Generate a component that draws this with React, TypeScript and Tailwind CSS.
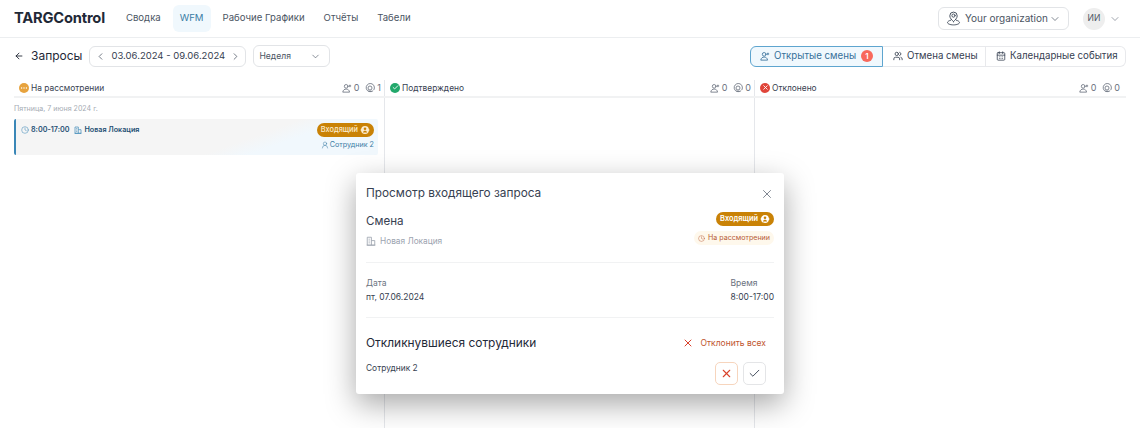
import { ArrowLeft, CalendarDays, Check, ChevronDown, ChevronLeft, ChevronRight, Clock, Users, UserRound, X } from "lucide-react";

const Incoming = ({ light }: { light?: boolean }) => (
  <span className={`flex h-[14px] items-center gap-[2px] rounded-full bg-[#c98206] px-[4px] text-[7.4px] leading-none ${light ? "font-medium text-[#fbeccf]" : "font-semibold text-white"}`}>
    Входящий
    <svg width="10" height="10" viewBox="0 0 10 10" className="shrink-0">
      <circle cx="5" cy="5" r="3.9" fill={light ? "#fbeccf" : "#fff"} />
      <rect x="0.5" y="4.2" width="9" height="1.6" rx="0.8" fill={light ? "#fbeccf" : "#fff"} />
      <circle cx="5" cy="3.7" r="1.3" fill="#c98206" />
      <path d="M2.8 7.5c.4-1.3 1.2-1.8 2.2-1.8s1.8.5 2.2 1.8z" fill="#c98206" />
    </svg>
  </span>
);

const PersonPlus = ({ size = 10 }: { size?: number }) => (
  <svg width={size} height={size} viewBox="0 0 12 12" fill="none" stroke="currentColor" strokeWidth="1" strokeLinecap="round" className="shrink-0">
    <circle cx="5" cy="4" r="2.2" />
    <path d="M1 10.5c.4-2.2 2-3.2 4-3.2s3.6 1 4 3.2z" />
    <path d="M9.5 2.5v2M8.5 3.5h2" />
  </svg>
);

const Target = ({ size = 10 }: { size?: number }) => (
  <svg width={size} height={size} viewBox="0 0 12 12" fill="none" stroke="currentColor" strokeWidth="1" className="shrink-0">
    <path d="M10.8 8A5 5 0 1 0 9.4 9.6" strokeLinecap="round" />
    <circle cx="6" cy="6" r="2.4" />
    <path d="M4.5 9.8h3" strokeLinecap="round" />
  </svg>
);

const Building = ({ size = 10 }: { size?: number }) => (
  <svg width={size} height={size} viewBox="0 0 12 12" fill="none" stroke="currentColor" strokeWidth="1" strokeLinejoin="round" className="shrink-0">
    <path d="M1.5 11V1.5h5V11z" />
    <path d="M6.5 5.5h4V11h-4M0.8 11h10.4" />
    <path d="M3 3.8h2M3 6h2M3 8.2h2" strokeWidth="0.8" />
  </svg>
);

const OrgIcon = () => (
  <svg width="15" height="15" viewBox="0 0 15 15" fill="none" stroke="currentColor" strokeWidth="1" strokeLinecap="round" className="shrink-0">
    <circle cx="7.5" cy="4.6" r="1.6" />
    <path d="M7.5 10.6C5.6 8.9 3.8 7 3.8 4.8a3.7 3.7 0 0 1 7.4 0c0 2.2-1.8 4.1-3.7 5.8z" />
    <path d="M4.6 9.2C2.7 9.8 1.5 10.6 1.5 11.6c0 1.2 2.7 2.3 6 2.3s6-1.1 6-2.3c0-1-1.2-1.8-3.1-2.4" />
  </svg>
);

const Counts = ({ a, b }: { a: number; b: number }) => (
  <div className="flex items-center gap-[6px] text-[9px] text-[#6b7280]">
    <span className="flex items-center gap-[2px]"><PersonPlus />{a}</span>
    <span className="flex items-center gap-[2px]"><Target />{b}</span>
  </div>
);

const Dot = ({ color, children }: { color: string; children: React.ReactNode }) => (
  <span className="flex h-[10px] w-[10px] items-center justify-center rounded-full text-white" style={{ backgroundColor: color }}>{children}</span>
);

export default function App() {
  return (
    <div className="relative h-[428px] w-[1140px] overflow-hidden bg-white font-['Inter',sans-serif] text-[#374151]">
      <header className="flex h-[38px] items-center justify-between border-b border-[#eceef0] pl-[14px] pr-[19px]">
        <div className="flex items-center">
          <span className="mr-[14px] text-[14.7px] font-bold tracking-[-0.2px] text-[#1f2937]">TARGControl</span>
          <nav className="flex items-center gap-[5px] text-[9.6px] text-[#4b5563]">
            <span className="px-[7px] py-[6px]">Сводка</span>
            <span className="rounded-md bg-[#f0f8fd] px-[7px] py-[6px] text-[#3a7ca5]">WFM</span>
            <span className="px-[7px] py-[6px]">Рабочие Графики</span>
            <span className="px-[7px] py-[6px]">Отчёты</span>
            <span className="px-[7px] py-[6px]">Табели</span>
          </nav>
        </div>
        <div className="flex items-center">
          <div className="flex h-[23px] w-[131px] items-center justify-between rounded-md border border-[#e2e4e7] pl-[7px] pr-[7px] text-[10px] text-[#4b5563]">
            <span className="flex items-center gap-[4px] whitespace-nowrap"><OrgIcon />Your organization</span>
            <ChevronDown size={12} strokeWidth={1.4} />
          </div>
          <div className="ml-[14px] flex h-[22px] w-[22px] items-center justify-center rounded-full bg-[#eeeeee] text-[8.5px] text-[#4b5563]">ИИ</div>
          <ChevronDown size={12} strokeWidth={1.3} className="ml-[4px] text-[#6b7280]" />
        </div>
      </header>

      <div className="flex h-[36px] items-center justify-between px-[14px]">
        <div className="flex items-center">
          <ArrowLeft size={10} strokeWidth={2} className="text-[#111827]" />
          <span className="ml-[7px] text-[12px] text-[#1f2937]">Запросы</span>
          <div className="ml-[7px] flex h-[21px] w-[157px] items-center rounded-md border border-[#e2e4e7] pl-[5px] pr-[4px] text-[9.5px] text-[#374151]">
            <ChevronLeft size={11} strokeWidth={1.5} />
            <span className="ml-[5px] whitespace-nowrap">03.06.2024 - 09.06.2024</span>
            <ChevronRight size={11} strokeWidth={1.5} className="ml-auto" />
          </div>
          <div className="ml-[7px] flex h-[22px] w-[77px] items-center justify-between rounded-md border border-[#e2e4e7] pl-[5px] pr-[8px] text-[8.6px] text-[#4b5563]">
            Неделя<ChevronDown size={11} strokeWidth={1.4} />
          </div>
        </div>
        <div className="flex h-[21px] items-stretch whitespace-nowrap text-[9.7px] text-[#374151]">
          <div className="flex w-[133px] items-center gap-[4px] rounded-l-md border border-[#5ea5cf] bg-[#f0f8fd] pl-[9px] text-[#37709a]">
            <PersonPlus />
            <span>Открытые смены</span>
            <span className="ml-[1px] flex h-[12px] w-[12px] items-center justify-center rounded-full bg-[#f8695c] text-[8px] font-semibold text-white">1</span>
          </div>
          <div className="flex w-[103px] items-center gap-[4px] border-y border-r border-[#e8e9ec] pl-[10px]"><Users size={10} strokeWidth={2} />Отмена смены</div>
          <div className="flex w-[140px] items-center gap-[4px] rounded-r-md border-y border-r border-[#e8e9ec] pl-[10px]"><CalendarDays size={10} strokeWidth={1.9} />Календарные события</div>
        </div>
      </div>

      <div className="mx-[14px] grid h-[354px] grid-cols-[371px_370px_371px] pt-[6px]">
        <section className="flex flex-col border-r border-[#e5e7eb]">
          <div className="mr-[-1px] flex h-[18px] items-center justify-between border-b-2 border-[#f1f2f3] pl-[5px] pr-[4px]">
            <span className="flex items-center gap-[2px] text-[8.4px] text-[#374151]">
              <Dot color="#e7a33e">
                <svg width="8" height="8" viewBox="0 0 8 8" fill="currentColor"><circle cx="1.6" cy="4" r="0.7" /><circle cx="4" cy="4" r="0.7" /><circle cx="6.4" cy="4" r="0.7" /></svg>
              </Dot>
              На рассмотрении
            </span>
            <Counts a={0} b={1} />
          </div>
          <div className="pr-[6px]">
            <div className="pt-[6px] text-[7.1px] leading-[9px] text-[#a5abb3]">Пятница, 7 июня 2024 г.</div>
            <div className="mt-[6px] flex h-[36px] justify-between rounded-[2px] border-l-2 border-[#3a87b7] bg-[linear-gradient(160deg,#f5f5f5_0%,#f5f5f5_62%,#f1f8fd_72%,#f1f8fd_100%)] pl-[5px] pr-[4px]">
              <div className="flex h-[14px] items-center pt-[8px] text-[7.2px] font-semibold text-[#1d4f73]">
                <Clock size={8} strokeWidth={1.5} className="text-[#3a87b7]" />
                <span className="ml-[2px]">8:00-17:00</span>
                <span className="ml-[5px] text-[#3a87b7]"><Building size={8} /></span>
                <span className="ml-[2px]">Новая Локация</span>
              </div>
              <div className="flex flex-col items-end pt-[4px]">
                <Incoming light />
                <span className="mt-[3px] flex items-center gap-[1px] text-[7.2px] leading-[10px] text-[#3a7ca5]"><UserRound size={8} strokeWidth={1.5} />Сотрудник 2</span>
              </div>
            </div>
          </div>
        </section>
        <section className="border-r border-[#e5e7eb]">
          <div className="mr-[-1px] flex h-[18px] items-center justify-between border-b-2 border-[#f1f2f3] pl-[5px] pr-[4px]">
            <span className="flex items-center gap-[2px] text-[8.4px] text-[#374151]">
              <Dot color="#22a86b"><Check size={7} strokeWidth={3} /></Dot>Подтверждено
            </span>
            <Counts a={0} b={0} />
          </div>
        </section>
        <section>
          <div className="flex h-[18px] items-center justify-between border-b-2 border-[#f1f2f3] pl-[5px] pr-[6px]">
            <span className="flex items-center gap-[2px] text-[8.4px] text-[#374151]">
              <Dot color="#e0453a"><X size={7} strokeWidth={3} /></Dot>Отклонено
            </span>
            <Counts a={0} b={0} />
          </div>
        </section>
      </div>

      <div className="absolute left-[356px] top-[173px] w-[428px] rounded-[3px] bg-white px-[10px] shadow-[0_10px_30px_rgba(0,0,0,0.35)]">
        <div className="flex h-[41px] items-center justify-between">
          <span className="text-[11.8px] text-[#374151]">Просмотр входящего запроса</span>
          <X size={14} strokeWidth={1.2} className="text-[#4b5563]" />
        </div>
        <div className="flex items-start justify-between">
          <div>
            <div className="text-[11.6px] leading-[14px] text-[#374151]">Смена</div>
            <div className="mt-[7px] flex items-center gap-[4px] text-[8.3px] text-[#9ca3af]"><Building size={10} />Новая Локация</div>
          </div>
          <div className="-mt-[2px] flex flex-col items-end">
            <Incoming />
            <span className="mt-[5px] flex h-[14px] items-center gap-[3px] rounded-full bg-[#fef8ec] px-[4px] text-[7.1px] text-[#b75a35]"><Clock size={7} strokeWidth={1.5} />На рассмотрении</span>
          </div>
        </div>
        <div className="mt-[15px] border-t border-[#f1f2f3]" />
        <div className="flex justify-between pt-[13px]">
          <div>
            <div className="text-[8.5px] leading-[14px] text-[#6b7280]">Дата</div>
            <div className="text-[8.5px] leading-[14px] text-[#374151]">пт, 07.06.2024</div>
          </div>
          <div>
            <div className="text-[8.5px] leading-[14px] text-[#6b7280]">Время</div>
            <div className="text-[8.5px] leading-[14px] text-[#374151]">8:00-17:00</div>
          </div>
        </div>
        <div className="mt-[13px] border-t border-[#f1f2f3]" />
        <div className="flex items-center justify-between pr-[8px] pt-[17px]">
          <span className="text-[11.9px] leading-[16px] text-[#1f2937]">Откликнувшиеся сотрудники</span>
          <span className="flex items-center gap-[6px] text-[8.5px] text-[#c0552f]"><X size={12} strokeWidth={2} className="text-[#d9412b]" />Отклонить всех</span>
        </div>
        <div className="flex items-start justify-between pb-[9px] pr-[8px] pt-[11px]">
          <span className="-mt-[1px] text-[8.4px] leading-[14px] text-[#374151]">Сотрудник 2</span>
          <div className="flex gap-[5px]">
            <span className="flex h-[23px] w-[23px] items-center justify-center rounded-[5px] border border-[#f7d5bd] text-[#d9412b]"><X size={13} strokeWidth={2} /></span>
            <span className="flex h-[23px] w-[23px] items-center justify-center rounded-[5px] border border-[#e4e5e7] text-[#374151]"><Check size={13} strokeWidth={1.7} /></span>
          </div>
        </div>
      </div>
    </div>
  );
}
